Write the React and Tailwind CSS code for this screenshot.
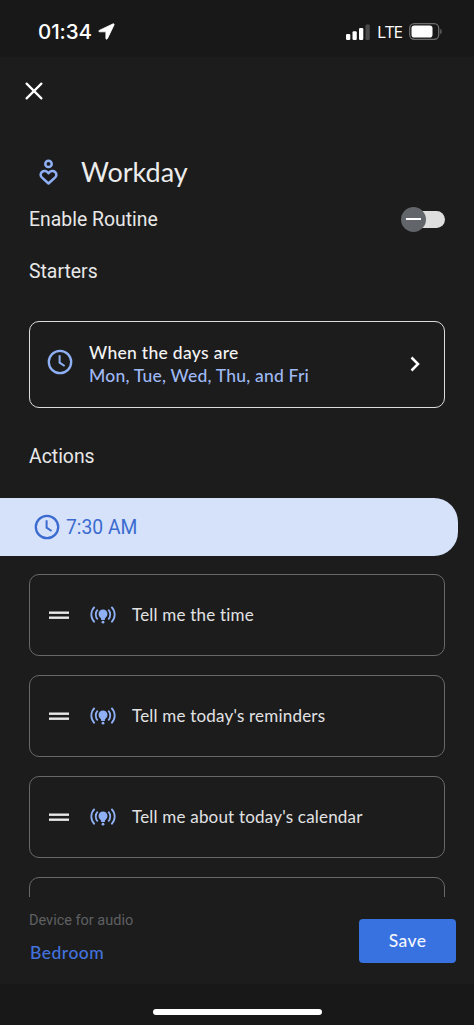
import React, { useState } from "react";

const actions = [
  "Tell me the time",
  "Tell me today's reminders",
  "Tell me about today's calendar",
];

function ClockIcon({ className }) {
  return (
    <svg viewBox="0 0 26 26" fill="none" stroke="currentColor" strokeWidth="2.3" className={className}>
      <circle cx="13" cy="13" r="11.2" />
      <path d="M12.6 6.3v7.3l5 3.4" strokeWidth="2" />
    </svg>
  );
}

function BroadcastIcon() {
  return (
    <svg viewBox="0 0 26 20" fill="none" stroke="currentColor" strokeWidth="1.8" className="h-5 w-[26px] text-[#8fb0f5]">
      <path d="M4.6 1.9C.2 6.3.2 12.9 4.6 17.3M21.4 1.9c4.4 4.4 4.4 11 0 15.4" />
      <path d="M7.7 4.7c-2.6 2.7-2.6 7.1 0 9.8M18.3 4.7c2.6 2.7 2.6 7.1 0 9.8" />
      <path
        d="M13 4.500a4.500 4.500 0 0 0-4.500 4.500c0 1.900 1.300 3.100 2.600 4.400v1.700h3.800v-1.700c1.300-1.300 2.600-2.500 2.600-4.400A4.500 4.500 0 0 0 13 4.500z"
        fill="currentColor"
        stroke="none"
      />
      <circle cx="13" cy="17.200" r="1.400" fill="currentColor" stroke="none" />
    </svg>
  );
}

function StatusBar() {
  return (
    <div className="flex h-[57px] shrink-0 items-center bg-[#181818] pt-[6px] pr-[32px] pl-[38px]">
      <span className="pt-[1px] font-['Inter',sans-serif] text-[20.5px] font-medium tracking-[-0.1px]">01:34</span>
      <svg viewBox="0 0 17 17" className="ml-[6px] h-[17px] w-[17px]" fill="currentColor" stroke="currentColor" strokeWidth="0.8" strokeLinejoin="round">
        <path d="M15.2.8 1.2 7.4c-.7.4-.5 1.4.3 1.4h6.4v6.6c0 .9 1.1 1.1 1.5.3L16 2c.3-.8-.1-1.4-.8-1.2z" />
      </svg>
      <div className="ml-auto flex items-center">
        <svg viewBox="0 0 24 16" className="h-4 w-6" fill="currentColor">
          <rect x="0" y="10" width="4.3" height="6" rx="1.2" />
          <rect x="6.5" y="7.2" width="4.3" height="8.8" rx="1.2" />
          <rect x="13" y="4" width="4.3" height="12" rx="1.2" />
          <rect x="19.5" y="0.5" width="4.3" height="15.5" rx="1.2" fill="#4a4a4a" />
        </svg>
        <span className="ml-[7px] font-['Open_Sans',sans-serif] text-[17px] font-medium tracking-[-0.9px]">LTE</span>
        <svg viewBox="0 0 34 17" className="-mr-[1px] ml-[7px] h-[17px] w-[34px]" fill="none">
          <rect x="0.7" y="0.7" width="29" height="15.6" rx="4.5" stroke="#6d6d6d" strokeWidth="1.3" />
          <rect x="2.5" y="2.5" width="21" height="12" rx="2.8" fill="#fff" />
          <path d="M31.3 5.7c1.8.6 1.8 5 0 5.6z" fill="#6d6d6d" />
        </svg>
      </div>
    </div>
  );
}

function ActionCard({ label }) {
  return (
    <div className="flex h-[82px] shrink-0 items-center rounded-[10px] border border-[#67686a] pl-[19px]">
      <svg viewBox="0 0 20 8" className="h-2 w-5" fill="#e8e8e8">
        <rect y="0.5" width="20" height="2.4" />
        <rect y="5.5" width="20" height="2.4" />
      </svg>
      <div className="ml-[21px]">
        <BroadcastIcon />
      </div>
      <span className="ml-4 font-['Lato',sans-serif] text-[17px] tracking-[0.2px] whitespace-nowrap text-[#e2e2e4]">
        {label}
      </span>
    </div>
  );
}

function App() {
  const [enabled, setEnabled] = useState(false);

  return (
    <div className="flex h-[1025px] w-[474px] flex-col overflow-hidden bg-[#1c1c1c] font-['Roboto',sans-serif] text-white">
      <StatusBar />

      {/* Close */}
      <div className="flex h-[68px] shrink-0 items-center pl-[25px]">
        <button aria-label="Close">
          <svg viewBox="0 0 18 18" className="h-[18px] w-[18px]" stroke="currentColor" strokeWidth="2.2" strokeLinecap="round">
            <path d="M1.6 1.6l14.8 14.8M16.4 1.6L1.6 16.4" />
          </svg>
        </button>
      </div>

      <main className="flex min-h-0 flex-1 flex-col overflow-hidden">
        {/* Routine name */}
        <div className="mt-[22px] flex h-[50px] shrink-0 items-center pl-[39px]">
          <svg viewBox="0 0 19 26" className="h-[26px] w-[19px] text-[#8fb0f5]" fill="none" stroke="currentColor" strokeWidth="2.5">
            <circle cx="9.5" cy="4.9" r="3.2" />
            <path d="M9.5 14.3C7.8 11.7 4.7 11.3 2.9 13c-1.7 1.6-1.7 3.8-.1 5.4l6.7 6.1 6.7-6.1c1.6-1.6 1.6-3.8-.1-5.4-1.8-1.7-4.9-1.3-6.6 1.3z" strokeLinejoin="round" />
          </svg>
          <h1 className="ml-[23px] font-['Lato',sans-serif] text-[27px] text-[#ececec]">Workday</h1>
        </div>

        <div className="flex h-[46px] shrink-0 items-center justify-between pr-[29px] pl-[29px]">
          <span className="text-[19.4px] text-[#e8e8e8]">Enable Routine</span>
          <button
            role="switch"
            aria-checked={enabled}
            onClick={() => setEnabled(!enabled)}
            className="mb-[2px] flex h-[25px] w-11 items-center"
          >
            <span className="z-10 flex h-[25px] w-[25px] shrink-0 items-center justify-center rounded-full bg-[#626569]">
              <span className="h-[2px] w-[15px] bg-white" />
            </span>
            <span className="-ml-[19px] h-[17px] w-[38px] shrink-0 rounded-full bg-[#dededf]" />
          </button>
        </div>

        {/* Starters */}
        <h2 className="flex h-[58px] shrink-0 items-center pl-[29px] text-[19.4px] text-[#e8e8e8]">Starters</h2>
        <div className="mx-[29px] mt-5 flex h-[87px] shrink-0 items-center rounded-[10px] border border-[#dcdcdc] pr-[24px] pl-[17px]">
          <ClockIcon className="mb-[6px] h-[26px] w-[26px] text-[#8fb0f5]" />
          <div className="ml-4 flex flex-col pb-[2px] font-['Lato',sans-serif] text-[17.5px] leading-[23px] font-medium whitespace-nowrap">
            <span className="tracking-[0.3px] text-[#f4f4f4]">When the days are</span>
            <span className="tracking-[0.2px] text-[#9fb9f3]">Mon, Tue, Wed, Thu, and Fri</span>
          </div>
          <svg viewBox="0 0 10 16" className="mb-[1px] ml-auto h-4 w-[10px]" fill="none" stroke="currentColor" strokeWidth="2.5">
            <path d="M1.5 1.5L8 8l-6.5 6.5" />
          </svg>
        </div>

        {/* Actions */}
        <h2 className="mt-[25px] flex h-[48px] shrink-0 items-center pl-[29px] text-[19.4px] text-[#e8e8e8]">Actions</h2>
        <div className="mt-[17px] mr-4 flex h-[58px] shrink-0 items-center rounded-r-[24px] bg-[#d6e2fa] pl-[34px] text-[#3b6bd0]">
          <ClockIcon className="h-[26px] w-[26px]" />
          <span className="ml-[6px] pt-[2px] text-[19.3px]">7:30 AM</span>
        </div>
        <div className="mx-[29px] mt-[18px] flex flex-col gap-[19px]">
          {actions.map((label) => (
            <ActionCard key={label} label={label} />
          ))}
          <div className="h-[82px] shrink-0 rounded-[10px] border border-[#67686a]" />
        </div>
      </main>

      {/* Footer */}
      <footer className="flex h-[87px] shrink-0 items-center justify-between pr-[18px] pl-[29px]">
        <div className="flex flex-col pb-[8px]">
          <span className="text-[14.5px] leading-[22px] text-[#5f6063]">Device for audio</span>
          <span className="mt-[10px] pl-[1px] font-['Lato',sans-serif] text-[17.5px] leading-[22px] font-medium tracking-[0.5px] text-[#4272dc]">
            Bedroom
          </span>
        </div>
        <button className="h-11 w-[97px] rounded-[4px] bg-[#3871e0] pt-[2px] font-['Lato',sans-serif] text-[17.5px] font-medium tracking-[0.4px] text-[#f1f5fd]">
          Save
        </button>
      </footer>
      <div className="flex h-[41px] shrink-0 justify-center bg-[#181818] pt-[25px]">
        <div className="h-[6px] w-[169px] rounded-full bg-white" />
      </div>
    </div>
  );
}

export default App;
